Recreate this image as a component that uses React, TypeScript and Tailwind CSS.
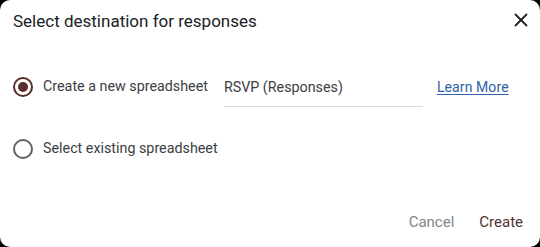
import { X } from "lucide-react";

function Radio({ checked }: { checked?: boolean }) {
  return (
    <span
      className={
        "flex h-5 w-5 shrink-0 items-center justify-center rounded-full border-2 " +
        (checked ? "border-[#5b2e2e]" : "border-[#5f6368]")
      }
    >
      {checked && <span className="h-[10px] w-[10px] rounded-full bg-[#5b2e2e]" />}
    </span>
  );
}

export default function App() {
  return (
    <div className="h-[247px] w-[540px] bg-black" style={{ fontFamily: "Roboto, 'Liberation Sans', sans-serif" }}>
      <div className="flex h-full w-full flex-col rounded-[10px] bg-white">
        {/* header */}
        <div className="flex h-[42px] items-start justify-between pl-[13px] pr-[7px] pt-[9px]">
          <h2 className="text-[17px] leading-6 text-[#202124]">Select destination for responses</h2>
          <button className="-mt-[1px] flex h-6 w-6 items-center justify-center text-[#202124]">
            <X size={22} strokeWidth={2} />
          </button>
        </div>

        {/* options */}
        <div className="flex flex-col gap-[22px] pl-[13px] pt-[25px]">
          <div className="flex h-10 items-center">
            <Radio checked />
            <span className="ml-[10px] text-[14.3px] text-[#3c4043]">Create a new spreadsheet</span>
            <div className="ml-[16px] flex h-10 w-[199px] items-center border-b border-[#dadce0] pt-[2px]">
              <input
                type="text"
                defaultValue="RSVP (Responses)"
                className="w-full bg-transparent text-[14.3px] text-[#3c4043] outline-none"
              />
            </div>
            <a className="ml-[14px] text-[14px] tracking-[0.1px] text-[#2f62a8] underline underline-offset-2">Learn More</a>
          </div>
          <div className="flex h-10 items-center">
            <Radio />
            <span className="ml-[10px] text-[14.3px] text-[#3c4043]">Select existing spreadsheet</span>
          </div>
        </div>

        {/* footer */}
        <div className="mt-[35px] flex justify-end gap-[5px] pr-[7px]">
          <button className="h-9 px-[10px] text-[15px] text-[#80868b]">Cancel</button>
          <button className="h-9 px-[10px] text-[15px] text-[#4e3434]">Create</button>
        </div>
      </div>
    </div>
  );
}
